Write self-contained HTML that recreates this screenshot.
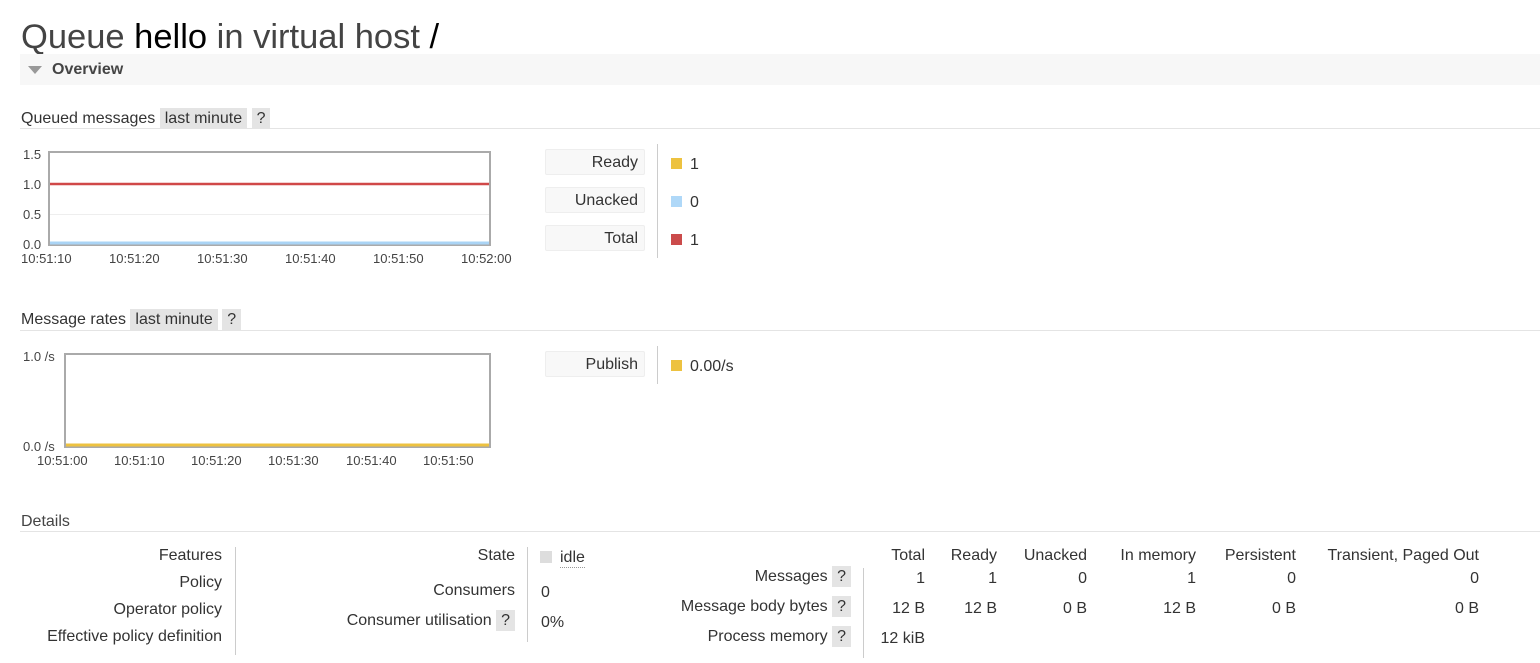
<!DOCTYPE html>
<html><head><meta charset="utf-8"><style>
body{margin:0;width:1540px;height:663px;background:#fff;font-family:"Liberation Sans",sans-serif;color:#333;position:relative;overflow:hidden}
.a{position:absolute;white-space:nowrap;line-height:18px}
.t{font-size:16px;margin-top:2px}
.q{background:#e4e4e4;padding:2px 5px}
.lb{position:absolute;background:#f8f8f8;border:1px solid #eee;border-radius:2px;width:100px;height:26px;text-align:right;font-size:16px;line-height:26px;box-sizing:border-box;padding-right:6px}
.sw{position:absolute;width:11px;height:11px}
</style></head><body>
<div class="a" style="left:21px;top:18px;font-size:34.5px;line-height:38px;color:#444">Queue <span style="color:#000">hello</span> in virtual host <span style="color:#000">/</span></div>
<div class="a" style="left:20px;top:54px;width:1520px;height:31px;background:#f7f7f7"></div>
<div class="a" style="left:28px;top:66px;width:0;height:0;border-left:7px solid transparent;border-right:7px solid transparent;border-top:8px solid #999"></div>
<div class="a" style="left:52px;top:61px;font-size:16px;font-weight:bold;color:#444">Overview</div>

<div class="a t" style="left:21px;top:108px">Queued messages <span class="q">last minute</span> <span class="q">?</span></div>
<div class="a" style="left:20px;top:128px;width:1520px;height:1px;background:#e4e4e4"></div>
<svg class="a" style="left:20px;top:145px" width="510" height="125">
<rect x="29" y="7" width="441" height="93" fill="#fff" stroke="#aaa" stroke-width="2"/>
<line x1="30" y1="69.5" x2="469" y2="69.5" stroke="#eee"/>
<line x1="30" y1="39" x2="469" y2="39" stroke="#d04848" stroke-width="2.5"/>
<line x1="30" y1="98" x2="469" y2="98" stroke="#aad4f5" stroke-width="3"/>
<g font-family="Liberation Sans" font-size="13" fill="#444">
<text x="3" y="14">1.5</text><text x="3" y="44">1.0</text><text x="3" y="74">0.5</text><text x="3" y="104">0.0</text>
<text x="1" y="118">10:51:10</text><text x="89" y="118">10:51:20</text><text x="177" y="118">10:51:30</text><text x="265" y="118">10:51:40</text><text x="353" y="118">10:51:50</text><text x="441" y="118">10:52:00</text></g></svg>
<div class="lb" style="left:545px;top:149px">Ready</div>
<div class="lb" style="left:545px;top:187px">Unacked</div>
<div class="lb" style="left:545px;top:225px">Total</div>
<div class="a" style="left:657px;top:144px;width:1px;height:114px;background:#ccc"></div>
<div class="sw" style="left:671px;top:158px;background:#edc240"></div><div class="a t" style="left:690px;top:154px">1</div>
<div class="sw" style="left:671px;top:196px;background:#afd8f8"></div><div class="a t" style="left:690px;top:192px">0</div>
<div class="sw" style="left:671px;top:234px;background:#cb4b4b"></div><div class="a t" style="left:690px;top:230px">1</div>

<div class="a t" style="left:21px;top:309px">Message rates <span class="q">last minute</span> <span class="q">?</span></div>
<div class="a" style="left:20px;top:330px;width:1520px;height:1px;background:#e4e4e4"></div>
<svg class="a" style="left:20px;top:345px" width="510" height="125">
<rect x="45" y="9" width="425" height="93" fill="#fff" stroke="#aaa" stroke-width="2"/>
<line x1="46" y1="100" x2="469" y2="100" stroke="#edc240" stroke-width="3"/>
<g font-family="Liberation Sans" font-size="13" fill="#444">
<text x="3" y="16">1.0 /s</text><text x="3" y="106">0.0 /s</text>
<text x="17" y="120">10:51:00</text><text x="94" y="120">10:51:10</text><text x="171" y="120">10:51:20</text><text x="248" y="120">10:51:30</text><text x="326" y="120">10:51:40</text><text x="403" y="120">10:51:50</text></g></svg>
<div class="lb" style="left:545px;top:351px">Publish</div>
<div class="a" style="left:657px;top:346px;width:1px;height:38px;background:#ccc"></div>
<div class="sw" style="left:671px;top:360px;background:#edc240"></div><div class="a t" style="left:690px;top:356px">0.00/s</div>

<div class="a t" style="left:21px;top:511px;color:#444">Details</div>
<div class="a" style="left:20px;top:531px;width:1520px;height:1px;background:#e4e4e4"></div>
<div class="a t" style="right:1318px;top:545px">Features</div>
<div class="a t" style="right:1318px;top:572px">Policy</div>
<div class="a t" style="right:1318px;top:599px">Operator policy</div>
<div class="a t" style="right:1318px;top:626px">Effective policy definition</div>
<div class="a" style="left:235px;top:547px;width:1px;height:108px;background:#ccc"></div>
<div class="a t" style="right:1025px;top:545px">State</div>
<div class="a t" style="right:1025px;top:580px">Consumers</div>
<div class="a t" style="right:1025px;top:610px">Consumer utilisation <span class="q">?</span></div>
<div class="a" style="left:527px;top:547px;width:1px;height:95px;background:#ccc"></div>
<div class="a" style="left:540px;top:551px;width:12px;height:12px;background:#ddd"></div>
<div class="a t" style="left:560px;top:547px;border-bottom:1px dotted #999">idle</div>
<div class="a t" style="left:541px;top:582px">0</div>
<div class="a t" style="left:541px;top:612px">0%</div>
<div class="a t" style="right:689px;top:566px">Messages <span class="q">?</span></div>
<div class="a t" style="right:689px;top:596px">Message body bytes <span class="q">?</span></div>
<div class="a t" style="right:689px;top:626px">Process memory <span class="q">?</span></div>
<div class="a" style="left:863px;top:568px;width:1px;height:90px;background:#ccc"></div>
<div class="a t" style="right:615px;top:545px">Total</div><div class="a t" style="right:615px;top:568px">1</div><div class="a t" style="right:615px;top:598px">12 B</div><div class="a t" style="right:615px;top:628px">12 kiB</div>
<div class="a t" style="right:543px;top:545px">Ready</div><div class="a t" style="right:543px;top:568px">1</div><div class="a t" style="right:543px;top:598px">12 B</div>
<div class="a t" style="right:453px;top:545px">Unacked</div><div class="a t" style="right:453px;top:568px">0</div><div class="a t" style="right:453px;top:598px">0 B</div>
<div class="a t" style="right:344px;top:545px">In memory</div><div class="a t" style="right:344px;top:568px">1</div><div class="a t" style="right:344px;top:598px">12 B</div>
<div class="a t" style="right:244px;top:545px">Persistent</div><div class="a t" style="right:244px;top:568px">0</div><div class="a t" style="right:244px;top:598px">0 B</div>
<div class="a t" style="right:61px;top:545px">Transient, Paged Out</div><div class="a t" style="right:61px;top:568px">0</div><div class="a t" style="right:61px;top:598px">0 B</div>
</body></html>
